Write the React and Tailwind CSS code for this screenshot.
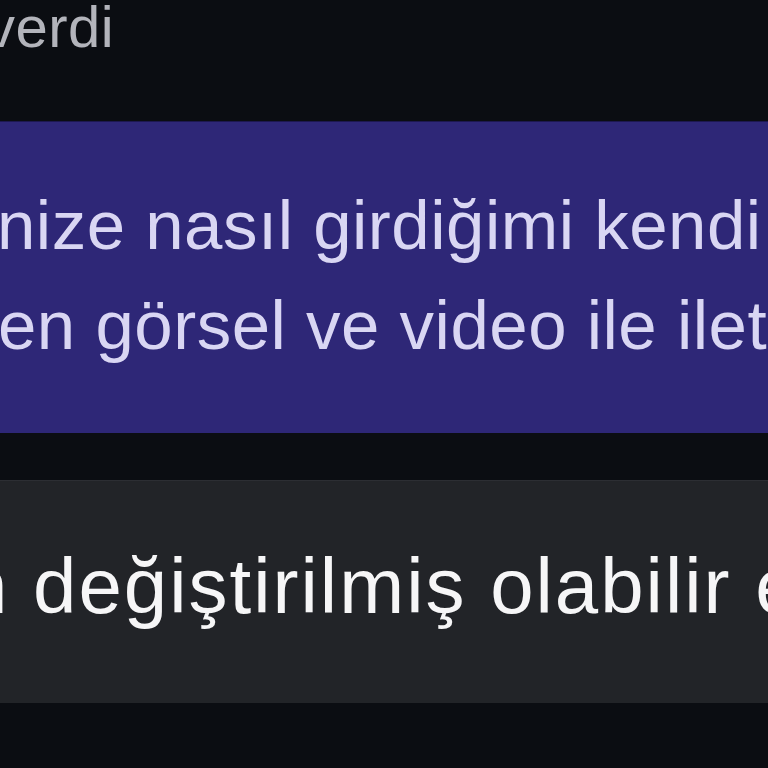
export default function App() {
    return (
        <div className="w-[768px] h-[768px] overflow-hidden bg-[#0b0d12] font-['Liberation_Sans',Arial,sans-serif]">
            {/* previous message tail */}
            <div className="h-[121px] overflow-hidden">
                <div className="-mt-[2px] -ml-[14px] whitespace-nowrap text-[58px] leading-[58px] tracking-[0.5px] text-[#b3b4bb]">
                    verdi
                </div>
            </div>

            {/* highlighted message */}
            <div className="h-[312px] overflow-hidden bg-[#2e2777] border-t border-[#1d1850] pt-[54px] text-[#d9d6f3] text-[69px] leading-[100px] tracking-[0.5px] whitespace-nowrap">
                <div className="-ml-[3px]">nize nasıl girdiğimi kendi</div>
                <div className="-ml-[2px]">en görsel ve video ile iletebilirim</div>
            </div>

            <div className="h-[47px]" />

            {/* quoted reply */}
            <div className="h-[223px] overflow-hidden bg-[#222428] border-t border-[#2c2e33] pt-[66px] text-[#f6f6f7] text-[78px] leading-[78px] tracking-[2px] whitespace-nowrap">
                <div className="-ml-[36px]">n değiştirilmiş olabilir en</div>
            </div>
        </div>
    )
}
